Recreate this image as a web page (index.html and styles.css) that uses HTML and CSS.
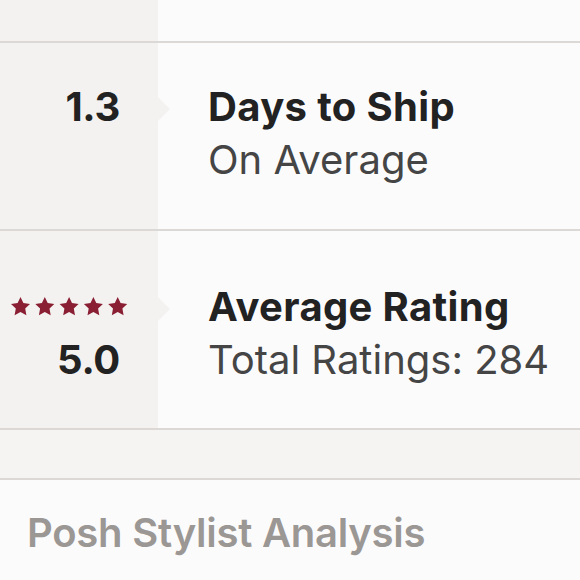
FILE: index.html
```html
<!DOCTYPE html>
<html>
<head>
<meta charset="utf-8">
<link rel="stylesheet" href="styles.css">
</head>
<body>
<div class="page">
  <div class="top">
    <div class="side"></div>
    <div class="main"></div>
  </div>
  <div class="stat stat-ship">
    <div class="side">
      <div class="value">1.3</div>
    </div>
    <div class="main">
      <div class="title">Days to Ship</div>
      <div class="sub">On Average</div>
    </div>
  </div>
  <div class="stat stat-rating">
    <div class="side">
      <svg class="stars" width="118" height="20" viewBox="0 0 118 20" aria-label="5 stars">
        <defs>
          <polygon id="star" points="9.5,0 12.4,6 19,6.9 14.2,11.5 15.4,18.2 9.5,15 3.6,18.2 4.8,11.5 0,6.9 6.6,6"/>
        </defs>
        <use href="#star" x="0" y="0"/>
        <use href="#star" x="24.3" y="0"/>
        <use href="#star" x="48.6" y="0"/>
        <use href="#star" x="72.9" y="0"/>
        <use href="#star" x="97.2" y="0"/>
      </svg>
      <div class="value">5.0</div>
    </div>
    <div class="main">
      <div class="title">Average Rating</div>
      <div class="sub">Total Ratings: 284</div>
    </div>
  </div>
  <div class="band"></div>
  <div class="bottom">
    <h2 class="heading">Posh Stylist Analysis</h2>
  </div>
</div>
</body>
</html>
```
FILE: styles.css
```css
html, body {
  margin: 0;
  padding: 0;
  background: #fcfbfc;
}
.page {
  width: 580px;
  height: 580px;
  overflow: hidden;
  font-family: "Inter", "Liberation Sans", sans-serif;
  background: #fcfbfc;
}
.top {
  display: grid;
  grid-template-columns: 158px 1fr;
  height: 41px;
  border-bottom: 2px solid #dcd8d6;
}
.side {
  background: #f4f2f0;
}
.main {
  background: #fcfbfc;
}
.stat {
  display: grid;
  grid-template-columns: 158px 1fr;
  border-bottom: 2px solid #dcd8d6;
}
.stat-ship {
  height: 186px;
}
.stat-rating {
  height: 197px;
}
.stat .side {
  display: flex;
  flex-direction: column;
  align-items: flex-end;
  padding-right: 38px;
}
.stat .main {
  padding-left: 50px;
}
.stat-ship .side,
.stat-ship .main {
  padding-top: 37px;
}
.stat-rating .main {
  padding-top: 49px;
}
.stat-rating .side {
  padding-top: 66px;
  padding-right: 29px;
}
.stars {
  display: block;
  fill: #8a1f34;
  margin-bottom: 16px;
}
.stat-rating .value {
  margin-right: 9px;
}
.value {
  font-size: 40px;
  line-height: 53px;
  font-weight: 700;
  letter-spacing: -0.3px;
  color: #222222;
}
.title {
  position: relative;
  font-size: 40px;
  line-height: 53px;
  font-weight: 700;
  letter-spacing: 0.35px;
  color: #222222;
}
.title::before {
  content: "";
  position: absolute;
  left: -50px;
  top: 17px;
  border-top: 12.5px solid transparent;
  border-bottom: 12.5px solid transparent;
  border-left: 12px solid #f4f2f0;
}
.sub {
  font-size: 40px;
  line-height: 53px;
  font-weight: 400;
  color: #454545;
}
.band {
  height: 48px;
  background: #f5f4f2;
  border-bottom: 2px solid #dcd8d6;
}
.bottom {
  padding: 26px 27px 0;
}
.heading {
  margin: 0;
  font-size: 40px;
  line-height: 53px;
  font-weight: 600;
  letter-spacing: -0.25px;
  color: #9b9794;
}
```
